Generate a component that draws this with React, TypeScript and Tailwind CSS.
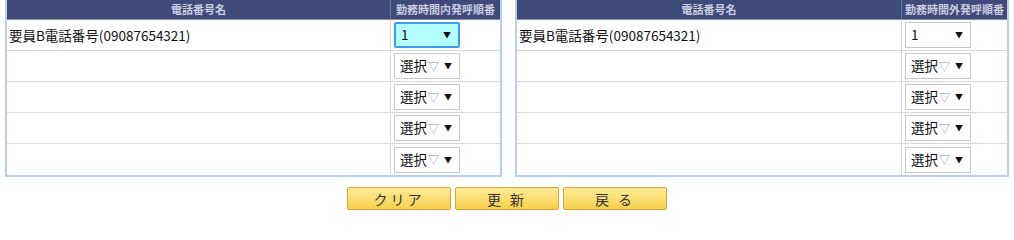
import React from "react";

const font = { fontFamily: '"Noto Sans CJK JP", "Noto Sans", sans-serif' };

function Sel({ label, focused }: { label: string; focused?: boolean }) {
  return (
    <div
      className={
        "flex h-[26px] w-[66px] items-center justify-between pl-[5px] pr-[7px] text-[13.5px] text-[#111] " +
        (focused
          ? "border-2 border-[#3d9be9] bg-[#b4fdfd] rounded-[2px]"
          : "border border-[#c9c9c9] bg-white")
      }
    >
      {label === "1" ? (
        <span className="leading-none">1</span>
      ) : (
        <span className="flex items-center leading-none">
          選択<span className="ml-[1px] text-[11px] text-[#7d8bb5]">▽</span>
        </span>
      )}
      <span className="text-[8px] leading-none">▼</span>
    </div>
  );
}

function Table({ head2, focusFirst, width, col2 }: { head2: string; focusFirst?: boolean; width: number; col2: number }) {
  const rows = ["要員B電話番号(09087654321)", "", "", "", ""];
  return (
    <div className="flex flex-col border-x-2 border-b-2 border-[#b8cff0]" style={{ width }}>
      <div className="flex h-[20px] bg-[#3f4a7b] text-[11px] font-bold text-[#c9cde0] border-b border-[#8a8f9c]">
        <div className="flex flex-1 items-center justify-center border-r border-[#6e7599]">電話番号名</div>
        <div className="flex items-center justify-center" style={{ width: col2 }}>{head2}</div>
      </div>
      {rows.map((r, i) => (
        <div
          key={i}
          className={"flex h-[31px] " + (i < rows.length - 1 ? "border-b border-[#d5d9d3]" : "")}
        >
          <div className="flex flex-1 items-center border-r border-[#d5d9d3] pl-[2px] text-[13.5px] text-[#111]">
            {r}
          </div>
          <div className="flex items-center pl-[3px]" style={{ width: col2 }}>
            <Sel label={i === 0 ? "1" : "選択▽"} focused={i === 0 && focusFirst} />
          </div>
        </div>
      ))}
    </div>
  );
}

function Btn({ children }: { children: React.ReactNode }) {
  return (
    <button
      className="h-[23px] w-[104px] rounded-[2px] border border-[#d9a232] bg-gradient-to-b from-[#fdeb95] to-[#f6d04a] text-[14px] leading-none tracking-[3px] text-[#333]"
      style={font}
    >
      {children}
    </button>
  );
}

export default function App() {
  return (
    <div className="w-[1014px] h-[210px] bg-white overflow-hidden" style={font}>
      <div className="flex justify-between px-[5px]">
        <Table head2="勤務時間内発呼順番" focusFirst width={497} col2={109} />
        <Table head2="勤務時間外発呼順番" width={494} col2={105} />
      </div>
      <div className="mt-[10px] flex justify-center gap-[4px]">
        <Btn>クリア</Btn>
        <Btn>更 新</Btn>
        <Btn>戻 る</Btn>
      </div>
    </div>
  );
}
